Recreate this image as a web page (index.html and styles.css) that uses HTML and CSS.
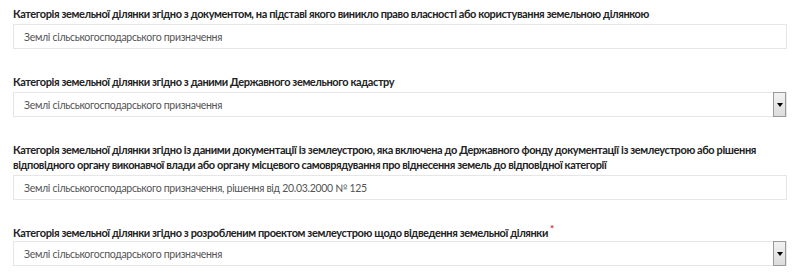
FILE: index.html
```html
<!DOCTYPE html>
<html lang="uk">
<head>
<meta charset="utf-8">
<link rel="stylesheet" href="styles.css">
</head>
<body>
<div class="form">
  <div class="field f1">
    <label class="label">Категорія земельної ділянки згідно з документом, на підставі якого виникло право власності або користування земельною ділянкою</label>
    <div class="input">Землі сільськогосподарського призначення</div>
  </div>
  <div class="field f2">
    <label class="label">Категорія земельної ділянки згідно з даними Державного земельного кадастру</label>
    <div class="select"><span class="value">Землі сільськогосподарського призначення</span><span class="btn"><span class="arrow"></span></span></div>
  </div>
  <div class="field f3">
    <label class="label">Категорія земельної ділянки згідно із даними документації із землеустрою, яка включена до Державного фонду документації із землеустрою або рішення відповідного органу виконавчої влади або органу місцевого самоврядування про віднесення земель до відповідної категорії</label>
    <div class="input">Землі сільськогосподарського призначення, рішення від 20.03.2000 № 125</div>
  </div>
  <div class="field f4">
    <label class="label">Категорія земельної ділянки згідно з розробленим проектом землеустрою щодо відведення земельної ділянки<span class="req">*</span></label>
    <div class="select"><span class="value">Землі сільськогосподарського призначення</span><span class="btn"><span class="arrow"></span></span></div>
  </div>
</div>
</body>
</html>
```
FILE: styles.css
```css
html, body { margin: 0; padding: 0; background: #fff; }
body { font-family: Lato, "Open Sans", sans-serif; color: #333; }
.form { padding: 6px 13px 0 13px; width: 774px; }
.field { display: flex; flex-direction: column; }
.f2, .f3, .f4 { margin-top: 25px; }
.label { font-weight: 700; font-size: 11px; line-height: 15px; color: #222; margin-bottom: 3px; letter-spacing: -0.4px; }
.f4 .label { margin-bottom: 1px; }
.input, .select { height: 25px; box-sizing: border-box; border: 1px solid #e6e6e6; font-size: 10.5px; color: #555; display: flex; align-items: center; padding-left: 10px; letter-spacing: -0.3px; }
.select { padding-right: 0; justify-content: space-between; }
.btn { width: 13px; height: 25px; box-sizing: border-box; border: 1px solid #9a9a9a; background: linear-gradient(#f2f2f2, #dcdcdc); display: flex; align-items: center; justify-content: center; margin: -1px 0; }
.arrow { width: 0; height: 0; border-left: 3px solid transparent; border-right: 3px solid transparent; border-top: 4px solid #000; }
.req { color: #e02020; font-size: 10px; line-height: 10px; vertical-align: top; position: relative; top: -2px; margin-left: 2px; }
```
